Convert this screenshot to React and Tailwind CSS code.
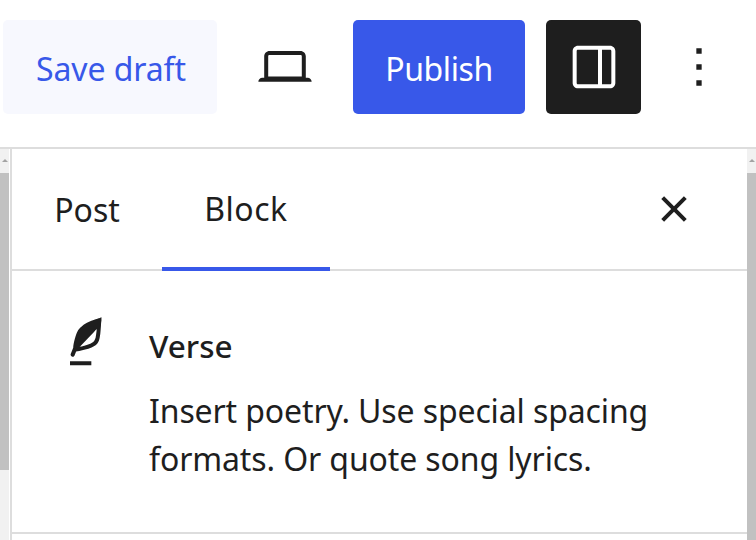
const font = { fontFamily: '"Noto Sans", sans-serif' };

function Icon({ d, className }) {
  return (
    <svg viewBox="0 0 24 24" className={className} fill="currentColor">
      <path d={d} />
    </svg>
  );
}

const laptop = 'M20.5 16h-.7V8c0-1.1-.9-2-2-2H6.2c-1.1 0-2 .9-2 2v8h-.7c-.8 0-1.5.7-1.5 1.5h20c0-.8-.7-1.5-1.5-1.5zM5.7 8c0-.3.2-.5.5-.5h11.6c.3 0 .5.2.5.5v7.6H5.7V8z';
const drawer = 'M18 4H6c-1.1 0-2 .9-2 2v12c0 1.1.9 2 2 2h12c1.1 0 2-.9 2-2V6c0-1.1-.9-2-2-2zM5.5 18V6c0-.3.2-.5.5-.5h7.5v13H6c-.3 0-.5-.2-.5-.5zm13 0c0 .3-.2.5-.5.5h-3v-13h3c.3 0 .5.2.5.5v12z';
const more = 'M13 19h-2v-2h2v2zm0-6h-2v-2h2v2zm0-6h-2V5h2v2z';
const close = 'M12 13.06l3.712 3.713 1.061-1.06L13.061 12l3.712-3.712-1.06-1.06L12 10.938 8.288 7.227l-1.061 1.06L10.939 12l-3.712 3.712 1.06 1.061L12 13.061z';
const verse = 'M17.8 2l-.9.3c-.1 0-3.6 1-5.2 2.1C10 5.5 9.3 6.5 8.9 7.1c-.6.9-1.7 4.7-1.7 6.3l-.9 2.3c-.2.4 0 .8.4 1 .1 0 .2.1.3.1.3 0 .6-.2.7-.5l.6-1.5c.3 0 .7-.1 1.2-.2.7-.1 1.4-.3 2.2-.5.8-.2 1.6-.5 2.4-.8.7-.3 1.4-.7 1.9-1.2s.8-1.2 1-1.9c.2-.7.3-1.6.4-2.4.1-.8.1-1.7.2-2.5 0-.8.1-1.5.2-2.1V2zm-1.9 5.6c-.1.8-.2 1.5-.3 2.1-.2.6-.4 1-.6 1.3-.3.3-.8.6-1.4.9-.7.3-1.4.5-2.2.8-.6.2-1.3.3-1.8.4L15 7.5c.3-.3.6-.7 1-1.1 0 .4 0 .8-.1 1.2zM6 20h8v-1.5H6V20z';

function Scrollbar({ thumb }) {
  return (
    <div className="w-[9px] bg-[#f1f1f1] flex flex-col items-center">
      <div className="h-[24px] flex items-start justify-center pt-[10px]">
        <div className="w-0 h-0 border-x-[3px] border-x-transparent border-b-[3px] border-b-[#a3a3a3]" />
      </div>
      <div className={`w-full bg-[#c1c1c1] ${thumb}`} />
    </div>
  );
}

export default function App() {
  return (
    <div className="w-[756px] h-[540px] overflow-hidden bg-white flex flex-col" style={font}>
      <div className="h-[147px] flex items-start pt-[20px] pl-[3px] shrink-0">
        <button className="w-[214px] h-[94px] rounded-[5px] bg-[#f7f8fe] text-[#3858e9] text-[32px] tracking-[-0.1px] pl-[2px] pt-[4px]">Save draft</button>
        <Icon d={laptop} className="w-[64px] h-[64px] mt-[15px] ml-[36px] text-[#1e1e1e]" />
        <button className="w-[172px] h-[94px] ml-[36px] rounded-[5px] bg-[#3858e9] text-white text-[32px] tracking-[-0.4px] pt-[4px]">Publish</button>
        <button className="w-[95px] h-[94px] ml-[21px] rounded-[5px] bg-[#1e1e1e] text-white flex items-center justify-center">
          <Icon d={drawer} className="w-[64px] h-[64px]" />
        </button>
        <Icon d={more} className="w-[64px] h-[64px] mt-[15px] ml-[26px] text-[#1e1e1e]" />
      </div>

      <div className="flex-1 flex border-t-2 border-[#dddddd] min-h-0">
        <Scrollbar thumb="h-[297px]" />
        <div className="w-[1px] bg-white" />
        <div className="flex-1 border-l-2 border-[#dddddd] bg-white min-w-0">
          <div className="h-[122px] border-b-2 border-[#dddddd] flex items-stretch text-[#1e1e1e] text-[32px]">
            <div className="w-[150px] flex items-center justify-center pt-[1px]">Post</div>
            <div className="w-[168px] -mb-[2px] border-b-[4px] border-[#3858e9] flex items-center justify-center pt-[1px] tracking-[0.5px]">Block</div>
            <div className="flex-1 flex items-center justify-end pr-[41px]">
              <Icon d={close} className="w-[64px] h-[64px]" />
            </div>
          </div>
          <div className="h-[263px] border-b-2 border-[#dddddd] flex items-start pl-[42px] pt-[41px] text-[#1e1e1e]">
            <Icon d={verse} className="w-[64px] h-[64px] shrink-0" />
            <div className="ml-[31px]">
              <div className="text-[31.5px] font-medium leading-[48px] mt-[10px]">Verse</div>
              <p className="text-[32px] tracking-[-0.12px] leading-[48px] mt-[17px] w-[540px]">
                Insert poetry. Use special spacing formats. Or quote song lyrics.
              </p>
            </div>
          </div>
        </div>
        <Scrollbar thumb="flex-1" />
      </div>
    </div>
  );
}
